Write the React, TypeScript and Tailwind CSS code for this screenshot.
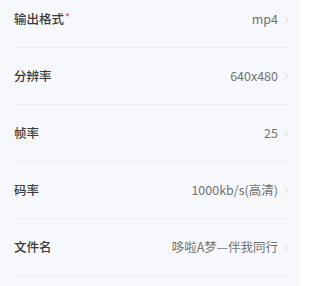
import { ChevronRight } from "lucide-react";

const rows = [
  { label: "输出格式", value: "mp4", required: true },
  { label: "分辨率", value: "640x480" },
  { label: "帧率", value: "25" },
  { label: "码率", value: "1000kb/s(高清)" },
  { label: "文件名", value: "哆啦A梦—伴我同行" },
];

export default function App() {
  return (
    <div
      className="w-[300px] h-[286px] bg-[#f7f8fb] overflow-hidden"
      style={{ fontFamily: '"Noto Sans CJK SC", "Noto Sans", sans-serif' }}
    >
      <div className="-mt-[9px] pl-[14px] pr-[8px]">
        {rows.map((row) => (
          <div
            key={row.label}
            className="h-[57px] flex items-center justify-between border-b border-[#eef0f4]"
          >
            <div className="text-[12.5px] text-[#3a3a3a] font-medium">
              {row.label}
              {row.required && (
                <span className="text-[#f24b4b] ml-[1px] relative -top-[3px] text-[10px]">*</span>
              )}
            </div>
            <div className="flex items-center gap-[3px] text-[12.5px] text-[#727272]">
              <span>{row.value}</span>
              <ChevronRight className="w-[11px] h-[11px] text-[#c8cad0]" strokeWidth={1.5} />
            </div>
          </div>
        ))}
      </div>
    </div>
  );
}
